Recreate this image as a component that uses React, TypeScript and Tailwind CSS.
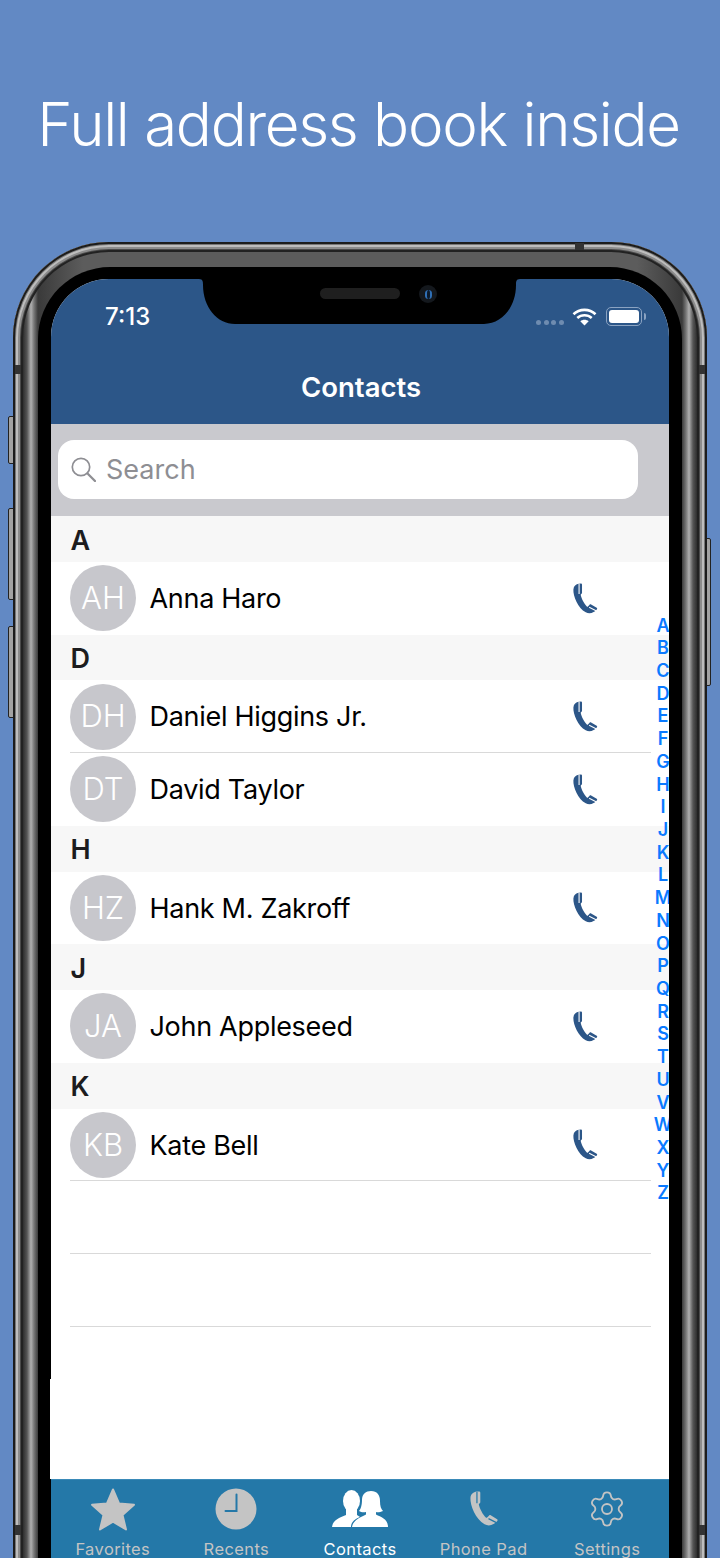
import React from 'react';
import { Settings } from 'lucide-react';

const sections = [
  { letter: 'A', rows: [{ initials: 'AH', name: 'Anna Haro' }] },
  { letter: 'D', rows: [{ initials: 'DH', name: 'Daniel Higgins Jr.' }, { initials: 'DT', name: 'David Taylor' }] },
  { letter: 'H', rows: [{ initials: 'HZ', name: 'Hank M. Zakroff' }] },
  { letter: 'J', rows: [{ initials: 'JA', name: 'John Appleseed' }] },
  { letter: 'K', rows: [{ initials: 'KB', name: 'Kate Bell' }] },
];

const indexLetters = 'ABCDEFGHIJKLMNOPQRSTUVWXYZ'.split('');

function PhoneGlyph({ className, fill, slit }: { className: string; fill: string; slit: string }) {
  return (
    <svg viewBox="0 0 25 31" className={className}>
      <path
        fill={fill}
        d="M6 .4C3 .8.7 2.600.4 6.200 0 13 5 25 13 29.600c2.600 1.500 5.500 1.300 8-.2 1.500-.9 3-2 3.600-3.200.2-.5 0-.9-.4-1.200l-5.700-3.500c-.5-.3-1-.2-1.400.2l-1.800 1.900c-.4.3-.8.3-1.200 0C11.500 21 8.500 15.500 7.900 12c-.1-.5.1-.8.500-1 .4-.3.800-.5.800-1V1.500C9.200.7 8.600.3 8 .3z"
      />
      <path fill="none" stroke={slit} strokeWidth="1.100" d="M6.200 .5v10.300M16.500 24.500l7.500 3.800" />
    </svg>
  );
}

function ContactRow({ initials, name, divider }: { initials: string; name: string; divider: boolean }) {
  return (
    <div className="h-[72.75px] bg-white pl-[19px]">
      <div className={`flex h-full w-[581px] items-center ${divider ? 'shadow-[inset_0_-1px_0_#d9d9d9]' : ''}`}>
        <div className="flex h-[66px] w-[66px] shrink-0 items-center justify-center rounded-full bg-[#c7c7cc] text-[31px] font-light text-white">
          {initials}
        </div>
        <div className="ml-[13.5px] flex-1 pt-[2px] text-[27px] tracking-[-0.3px] text-black">{name}</div>
        <PhoneGlyph className="mr-[53.5px] h-[31px] w-[24.5px]" fill="#2c5688" slit="#ffffff" />
      </div>
    </div>
  );
}

function TabItem({ label, active, children }: { label: string; active?: boolean; children: React.ReactNode }) {
  return (
    <div className="flex flex-col items-center">
      <div className="flex h-[55px] items-center justify-center pb-[0px] pt-[2px]">{children}</div>
      <div className={`mt-[5px] text-[16.5px] leading-[18px] tracking-[0.4px] ${active ? 'text-white' : 'text-[#c4c4c4]'}`}>
        {label}
      </div>
    </div>
  );
}

export default function App() {
  return (
    <div className="h-[1558px] w-[720px] overflow-hidden bg-[#6289c4] font-['Inter',sans-serif]">
      <div className="flex h-[242px] items-center justify-center pr-[3px] pt-[5px] text-[60px] font-light tracking-[-1.3px] text-white">
        Full address book inside
      </div>

      {/* phone runs past the bottom of the page */}
      <div className="relative mx-[13px] h-[1356px]">
        <div className="absolute left-[-5px] top-[174px] h-[48px] w-[6px] rounded-l-[2px] border border-[#222] bg-[#a3a3a3]" />
        <div className="absolute left-[-5px] top-[266px] h-[92px] w-[6px] rounded-l-[2px] border border-[#222] bg-[#a3a3a3]" />
        <div className="absolute left-[-5px] top-[384px] h-[92px] w-[6px] rounded-l-[2px] border border-[#222] bg-[#a3a3a3]" />
        <div className="absolute right-[-4px] top-[296px] h-[148px] w-[5px] rounded-r-[2px] border border-[#222] bg-[#a3a3a3]" />

        <div className="relative h-full rounded-t-[96px] bg-[linear-gradient(to_right,#2e2e2e_10px,#555_14px,#b0b0b0_18px,#777_21px,#3a3a3a_25px,#5c5c5c_70px,#5c5c5c_624px,#3a3a3a_669px,#777_673px,#b0b0b0_676px,#555_680px,#2e2e2e_684px)] px-[25px] pt-[25px] shadow-[inset_0_0_0_2px_#1c1c1c,inset_0_0_0_3px_#777,inset_0_0_0_5px_#bdbdbd,inset_0_0_0_7px_#8c8c8c,inset_0_0_0_8px_#4a4a4a,inset_0_0_0_10px_#222]">
          {/* antenna bands */}
          <div className="absolute left-[2px] top-[123px] h-[9px] w-[6px] bg-[#333]" />
          <div className="absolute right-[2px] top-[123px] h-[9px] w-[6px] bg-[#333]" />
          <div className="absolute left-[2px] top-[1283px] h-[10px] w-[6px] bg-[#333]" />
          <div className="absolute right-[2px] top-[1283px] h-[10px] w-[6px] bg-[#333]" />
          <div className="absolute left-[562px] top-[1px] h-[7px] w-[9px] bg-[#333]" />

          <div className="h-full rounded-t-[72px] bg-black px-[13px] pt-[12px]">
            <div className="relative flex h-[1279px] flex-col overflow-hidden rounded-t-[58px] bg-white">
              {/* nav bar */}
              <div className="relative h-[145px] shrink-0 bg-[#2c5688]">
                <div className="absolute left-[54px] top-[23px] text-[24px] font-medium leading-[30px] text-white">7:13</div>
                <div className="absolute left-[485px] top-[41px] flex gap-[2.5px]">
                  <div className="h-[5px] w-[5px] rounded-full bg-[#6f8cb0]" />
                  <div className="h-[5px] w-[5px] rounded-full bg-[#6f8cb0]" />
                  <div className="h-[5px] w-[5px] rounded-full bg-[#6f8cb0]" />
                  <div className="h-[5px] w-[5px] rounded-full bg-[#6f8cb0]" />
                </div>
                <svg viewBox="0 0 25 19" className="absolute left-[521px] top-[28px] h-[19px] w-[25px]">
                  <path fill="none" stroke="#fff" strokeWidth="2.6" d="M1.500 7.200C7.500 1.400 17.500 1.400 23.500 7.200" />
                  <path fill="none" stroke="#fff" strokeWidth="2.6" d="M5.300 11C9.300 7.300 15.700 7.300 19.700 11" />
                  <path fill="#fff" d="M12.500 18.500 8.300 14.200c2.400-2 6-2 8.400 0z" />
                </svg>
                <div className="absolute left-[555px] top-[28px] h-[19px] w-[36px] rounded-[5px] border border-[#8ba3c2] p-[2px]">
                  <div className="h-full w-full rounded-[3px] bg-white" />
                </div>
                <div className="absolute left-[593px] top-[34px] h-[7px] w-[2px] rounded-r-full bg-[#8ba3c2]" />
                <div className="absolute inset-x-0 top-[90px] text-center text-[27.5px] font-semibold leading-[36px] text-white">
                  <span className="ml-[2px]">Contacts</span>
                </div>

                {/* notch */}
                <svg viewBox="0 0 321 45" className="absolute left-[148px] top-0 h-[45px] w-[321px]">
                  <path d="M0 0H321C317 0 317 3 317 6 317 28 303 45 285 45H36C18 45 4 28 4 6 4 3 4 0 0 0Z" fill="#000" />
                </svg>
                <div className="absolute left-[269px] top-[9px] h-[11px] w-[80px] rounded-full bg-[#1f1f1f]" />
                <div className="absolute left-[368px] top-[6px] flex h-[18px] w-[18px] items-center justify-center rounded-full bg-[#14181d]">
                  <div className="h-[9px] w-[7px] rounded-full border-x-2 border-[#2f6fb5] bg-[#0c1a2b]" />
                </div>
              </div>

              {/* search */}
              <div className="h-[92px] shrink-0 bg-[#c9c9ce] px-[7px] py-[16px]">
                <div className="flex h-[59px] w-[580px] items-center rounded-[16px] bg-white pl-[13px] text-[#8e8e93]">
                  <svg viewBox="0 0 25 25" className="h-[25px] w-[25px]">
                    <circle cx="10" cy="10" r="8.700" fill="none" stroke="currentColor" strokeWidth="1.700" />
                    <path d="M16.500 16.500 24 24" fill="none" stroke="currentColor" strokeWidth="2.300" strokeLinecap="round" />
                  </svg>
                  <span className="ml-[10px] pt-[1px] text-[27px]">Search</span>
                </div>
              </div>

              {/* list */}
              {sections.map((section) => (
                <div key={section.letter}>
                  <div className="flex h-[45.75px] items-center bg-[#f7f7f7] pl-[19.5px] pt-[4px] text-[27px] font-semibold text-[#1c1c1e]">
                    {section.letter}
                  </div>
                  {section.rows.map((row, i) => (
                    <ContactRow
                      key={row.name}
                      initials={row.initials}
                      name={row.name}
                      divider={i < section.rows.length - 1 || section.letter === 'K'}
                    />
                  ))}
                </div>
              ))}
              <div className="h-[72.75px] shrink-0 pl-[19px]">
                <div className="h-full w-[581px] shadow-[inset_0_-1px_0_#d9d9d9]" />
              </div>
              <div className="h-[72.75px] shrink-0 pl-[19px]">
                <div className="h-full w-[581px] shadow-[inset_0_-1px_0_#d9d9d9]" />
              </div>
              <div className="flex-1" />

              {/* tab bar */}
              <div className="grid h-[79px] shrink-0 grid-cols-5 border-t border-[#3a8ab8] bg-[#2478a8]">
                <TabItem label="Favorites">
                  <svg viewBox="0 0 46 44" className="h-[44px] w-[46px]">
                    <path
                      d="M23 2.500 29 16.500 44 17.800 32.500 28 36 42.500 23 34.700 10 42.500 13.500 28 2 17.800 17 16.500Z"
                      fill="#c4c4c4"
                      stroke="#c4c4c4"
                      strokeWidth="2"
                      strokeLinejoin="round"
                    />
                  </svg>
                </TabItem>
                <TabItem label="Recents">
                  <svg viewBox="0 0 42 42" className="h-[42px] w-[42px]">
                    <circle cx="21" cy="21" r="20.5" fill="#c4c4c4" />
                    <path d="M21.500 6.500V23H10.500" fill="none" stroke="#2478a8" strokeWidth="2" strokeLinecap="round" />
                  </svg>
                </TabItem>
                <TabItem label="Contacts" active>
                  <svg viewBox="0 0 58 40" className="h-[40px] w-[58px]">
                    <ellipse cx="20.5" cy="12" rx="8.5" ry="11" fill="#fff" />
                    <path d="M1 38C2 31 8 29 15 26V19H26V26L29 28C24 30 20 33 20 38Z" fill="#fff" />
                    <path
                      d="M31 11C31 5 35 2 40 2 46 2 49 6 49 12 49 17 50 20 52 22 49 23.500 46 23.500 45 23V25.500C50 28 57 30 57 38H21C22 31 30 28 35 25.500V23C33 23.500 30 23.500 28 22 30 20 31 15 31 11Z"
                      fill="#fff"
                      stroke="#2478a8"
                      strokeWidth="1"
                      paintOrder="stroke"
                    />
                  </svg>
                </TabItem>
                <TabItem label="Phone Pad">
                  <PhoneGlyph className="h-[37px] w-[28px]" fill="#c4c4c4" slit="#2478a8" />
                </TabItem>
                <TabItem label="Settings">
                  <Settings size={40} strokeWidth={1.1} className="text-[#c4c4c4]" />
                </TabItem>
              </div>

              {/* alphabet index */}
              <div className="absolute left-[600px] top-[335.5px] flex w-[24px] flex-col items-center text-[18px] font-semibold leading-[22.72px] text-[#0a7aff]">
                {indexLetters.map((letter) => (
                  <div key={letter} className="h-[22.72px]">
                    {letter}
                  </div>
                ))}
              </div>
            </div>
          </div>
          <div className="absolute left-[37px] top-[1137px] h-[100px] w-px bg-white" />
        </div>
      </div>
    </div>
  );
}
